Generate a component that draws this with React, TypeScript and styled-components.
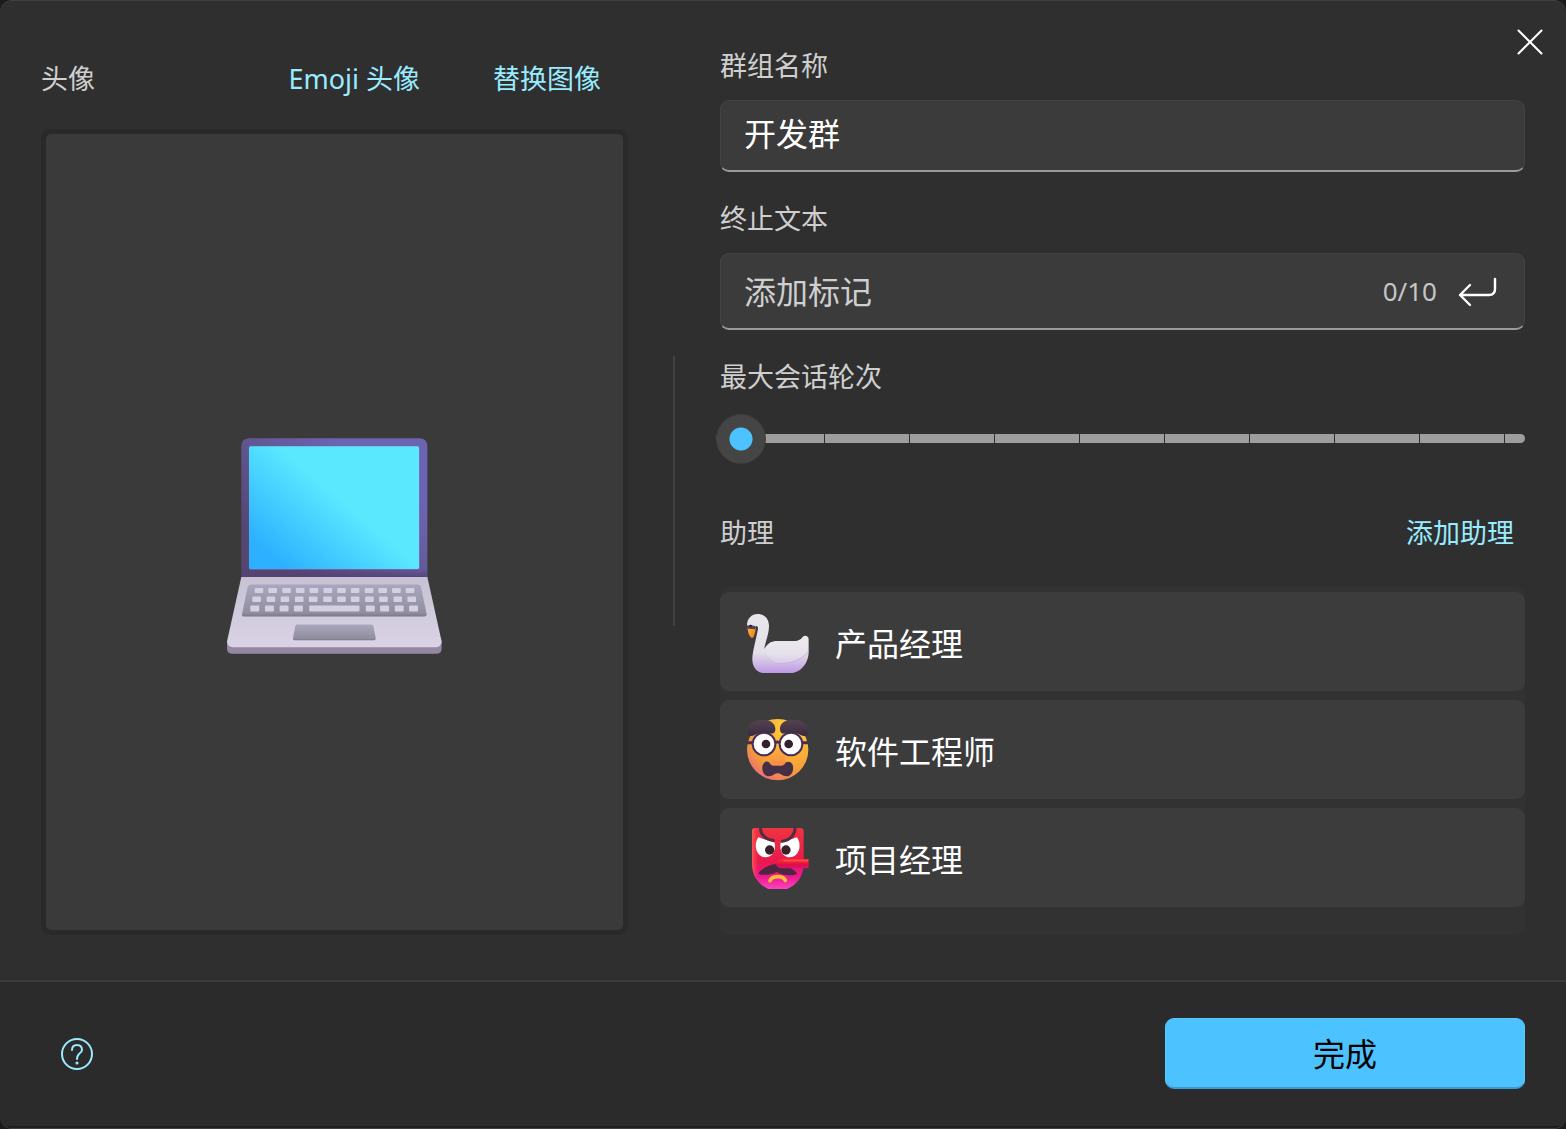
import React, { useState } from "react";
import styled, { createGlobalStyle } from "styled-components";

const GlobalStyle = createGlobalStyle`
  * { box-sizing: border-box; }
  body {
    margin: 0;
    background: #1b1b1b;
    color: #ffffff;
    font-family: "Noto Sans", "Noto Sans CJK SC", sans-serif;
  }
  button, input { font-family: inherit; }
`;

const Dialog = styled.form`
  position: relative;
  display: flex;
  flex-direction: column;
  min-height: 100vh;
  border: solid #414141;
  border-width: 1px 0;
  border-radius: 12px;
  background: #2f2f2f;
  overflow: hidden;
`;

const CloseButton = styled.button`
  position: absolute;
  top: 19px;
  right: 14px;
  display: grid;
  place-items: center;
  width: 44px;
  height: 44px;
  padding: 0;
  border: 0;
  background: none;
  color: #ffffff;
`;

const Content = styled.div`
  flex: 1;
  display: grid;
  grid-template-columns: minmax(0, 587fr) 2px minmax(0, 805fr);
  column-gap: 45px;
  padding: 45px 41px;
`;

const AvatarPanel = styled.section`
  display: flex;
  flex-direction: column;
`;

const AvatarHeader = styled.div`
  display: flex;
  align-items: baseline;
  height: 83px;
  padding-top: 13px;
`;

const AvatarTitle = styled.span`
  margin-right: auto;
  color: #cfcfcf;
  font-size: 27px;
  line-height: 40px;
`;

const LinkButtons = styled.div`
  display: flex;
  gap: 19px;
`;

const LinkButton = styled.button<{ $inset: number }>`
  padding: 0 ${(p) => p.$inset}px;
  border: 0;
  background: none;
  color: #99ebff;
  font-size: 27px;
  line-height: 40px;
  white-space: nowrap;
`;

const AvatarFrame = styled.div`
  flex: 1;
  display: flex;
  align-items: center;
  justify-content: center;
  padding-top: 28px;
  border: 5px solid #292929;
  border-radius: 10px;
  background: #3a3a3a;
`;

const Divider = styled.div`
  align-self: center;
  height: 270px;
  background: #414141;
`;

const Settings = styled.section`
  display: flex;
  flex-direction: column;
`;

const Field = styled.div`
  display: flex;
  flex-direction: column;
  margin-bottom: 27px;
`;

const Label = styled.label`
  color: #cfcfcf;
  font-size: 27px;
  line-height: 40px;
`;

const InputBox = styled.div<{ $height: number; $lift?: number }>`
  display: flex;
  align-items: center;
  height: ${(p) => p.$height}px;
  margin-top: 14px;
  padding: 0 24px ${(p) => p.$lift ?? 0}px 23px;
  border: 1px solid #424242;
  border-bottom: 2px solid #9a9a9a;
  border-radius: 9px;
  background: #3b3b3b;
`;

const TextInput = styled.input`
  flex: 1;
  min-width: 0;
  height: 48px;
  padding: 0;
  border: 0;
  outline: 0;
  background: none;
  color: #ffffff;
  font-size: 32px;
  &::placeholder { color: #cfcfcf; opacity: 1; }
`;

const Counter = styled.span`
  color: #c5c5c5;
  font-size: 26px;
  line-height: 40px;
`;

const EnterButton = styled.button`
  display: grid;
  place-items: center;
  margin-left: 21px;
  padding: 0;
  border: 0;
  background: none;
  color: #ffffff;
`;

const Slider = styled.input`
  appearance: none;
  height: 50px;
  margin: 16px 0 1px -4px;
  background: none;
  outline: 0;

  &::-webkit-slider-runnable-track {
    height: 9px;
    border-radius: 5px;
    background-color: #2f2f2f;
    background-image: linear-gradient(90deg, #9e9e9e calc(100% - 1px), #2f2f2f calc(100% - 1px));
    background-position: 24px 0;
    background-size: calc((100% - 44px) / 9) 100%;
  }

  &::-webkit-slider-thumb {
    appearance: none;
    width: 50px;
    height: 50px;
    margin-top: -20px;
    border: 1px solid #3e3e3e;
    border-radius: 50%;
    background: radial-gradient(circle, #4cc2ff 11px, #454545 12px);
  }
`;

const ListHeader = styled.div`
  display: flex;
  align-items: center;
  justify-content: space-between;
  margin: 22px 0 34px;
`;

const ListTitle = styled.h2`
  margin: 0;
  color: #cfcfcf;
  font-size: 27px;
  font-weight: 400;
  line-height: 40px;
`;

const AssistantList = styled.ul`
  flex: 1;
  display: flex;
  flex-direction: column;
  gap: 9px;
  margin: 0;
  padding: 5px 0 28px;
  border-radius: 9px;
  background: #323232;
  list-style: none;
`;

const Assistant = styled.li`
  display: flex;
  align-items: center;
  gap: 26px;
  height: 99px;
  padding: 0 26px;
  border-radius: 9px;
  background: #3c3c3c;
`;

const AssistantName = styled.span`
  padding-top: 4px;
  font-size: 32px;
  line-height: 48px;
`;

const Footer = styled.footer`
  display: flex;
  align-items: center;
  justify-content: space-between;
  height: 148px;
  padding: 0 41px 3px;
  border-top: 2px solid #3c3c3c;
  background: #2b2b2b;
  box-shadow: inset 0 -2px #1f1f1f;
`;

const HelpButton = styled.button`
  display: grid;
  place-items: center;
  width: 72px;
  height: 72px;
  padding: 0;
  border: 0;
  background: none;
  color: #99ebff;
`;

const DoneButton = styled.button`
  width: 360px;
  height: 71px;
  padding: 2px 0 0;
  border: 1px solid #5bc7ff;
  border-bottom: 2px solid #3b9bd0;
  border-radius: 9px;
  background: #4cc2ff;
  color: #000000;
  font-size: 32px;
  line-height: 48px;
`;

const keyRows = [
  { y: 489, h: 15, xs: [119, 160, 202, 243, 284, 326, 367, 408, 450, 491, 532, 573], w: 26 },
  { y: 515, h: 16, xs: [112, 155, 197, 240, 282, 325, 367, 408, 451, 493, 536, 578], w: 26 },
  { y: 542, h: 18, xs: [106, 150, 194, 237, 453, 496, 540, 583], w: 27 },
];

const Laptop = () => (
  <svg width="215" height="216" viewBox="36 39 646 648" role="img" aria-label="💻">
    <defs>
      <linearGradient id="lid" x1="0" y1="0.65" x2="0.6" y2="0.1">
        <stop offset="0" stopColor="#554570" />
        <stop offset="1" stopColor="#6c64b0" />
      </linearGradient>
      <linearGradient id="lidEdge" x1="0" y1="0" x2="0" y2="1">
        <stop offset="0.93" stopColor="#54447c" stopOpacity="0" />
        <stop offset="1" stopColor="#54406e" />
      </linearGradient>
      <linearGradient id="screen" gradientUnits="userSpaceOnUse" x1="170" y1="400" x2="345" y2="195">
        <stop offset="0" stopColor="#2cb0ff" />
        <stop offset="1" stopColor="#5ae8ff" />
      </linearGradient>
      <linearGradient id="deck" x1="0" y1="0" x2="0" y2="1">
        <stop offset="0" stopColor="#c6c2d4" />
        <stop offset="1" stopColor="#d9d3e5" />
      </linearGradient>
      <linearGradient id="well" x1="0" y1="0" x2="0" y2="1">
        <stop offset="0" stopColor="#a9a7bd" />
        <stop offset="0.88" stopColor="#918e9f" />
        <stop offset="1" stopColor="#7d7888" />
      </linearGradient>
    </defs>
    <path d="M79 462V64Q79 39 104 39H613Q638 39 638 64V462Z" fill="url(#lid)" />
    <path d="M79 462V64Q79 39 104 39H613Q638 39 638 64V462Z" fill="url(#lidEdge)" />
    <rect x="102" y="63" width="514" height="371" rx="5" fill="#7b68ad" />
    <rect x="102" y="63" width="511" height="369" rx="5" fill="url(#screen)" />
    <path d="M36 650H681V670Q681 687 664 687H53Q36 687 36 670Z" fill="#9586a2" />
    <path d="M79 456H638L681 650Q679 667 664 667H53Q38 667 36 650Z" fill="url(#deck)" />
    <path d="M108 479H609Q617 479 619 487L636 568Q636 575 629 575H88Q80 575 81 568L98 487Q100 479 108 479Z" fill="url(#well)" />
    {keyRows.map((row) =>
      row.xs.map((x) => <rect key={`${row.y}-${x}`} x={x} y={row.y} width={row.w} height={row.h} rx="3" fill="#d5cfe2" />),
    )}
    <rect x="283" y="542" width="151" height="18" rx="3" fill="#d5cfe2" />
    <path d="M247 599H470Q475 599 476 604L483 641Q483 646 478 646H239Q233 646 234 641L241 604Q242 599 247 599Z" fill="url(#well)" />
  </svg>
);

const Swan = () => (
  <svg width="63" height="63" viewBox="33 30 189 189" aria-hidden="true">
    <defs>
      <linearGradient id="swanBody" gradientUnits="userSpaceOnUse" x1="0" y1="42" x2="0" y2="219">
        <stop offset="0" stopColor="#e9e6ea" />
        <stop offset="0.65" stopColor="#e4e0e8" />
        <stop offset="0.85" stopColor="#cdb8e6" />
        <stop offset="1" stopColor="#bd97e4" />
      </linearGradient>
      <linearGradient id="swanWing" gradientUnits="userSpaceOnUse" x1="0" y1="115" x2="0" y2="195">
        <stop offset="0" stopColor="#edeaee" />
        <stop offset="0.6" stopColor="#e6e1ea" />
        <stop offset="1" stopColor="#d5c6e8" />
      </linearGradient>
      <linearGradient id="beak" x1="0" y1="0" x2="1" y2="1">
        <stop offset="0" stopColor="#ffb23c" />
        <stop offset="1" stopColor="#f27a16" />
      </linearGradient>
    </defs>
    <path d="M36 76C36 56 50 42 68 42C90 42 103 58 102 80C101 105 91 125 88 147C98 130 108 123 128 123H176C192 123 198 117 203 111C210 103 222 109 221 119V155C221 190 196 219 166 219H86C66 219 53 202 52 181C51 160 64 115 69 87C70 77 62 74 59 86Z" fill="url(#swanBody)" />
    <path d="M89 148C98 132 109 125 128 125H176C192 125 198 119 205 112C211 106 219 110 219 119V150C211 178 165 192 126 189C112 183 96 168 89 148Z" fill="url(#swanWing)" />
    <path d="M128 190C165 193 204 179 220 153" fill="none" stroke="#c4b0d8" strokeWidth="3" opacity="0.8" />
    <path d="M38 82L62 84C61 99 56 114 51 114C44 113 38 98 38 82Z" fill="url(#beak)" />
    <path d="M37 79L45 74L61 79V88L38 86Z" fill="#51435b" />
    <circle cx="47" cy="78" r="4" fill="#2c2032" />
  </svg>
);

const Disguise = () => (
  <svg width="63" height="63" viewBox="33 39 189 189" aria-hidden="true">
    <defs>
      <radialGradient id="face" gradientUnits="userSpaceOnUse" cx="170" cy="70" r="185">
        <stop offset="0" stopColor="#ffd443" />
        <stop offset="0.4" stopColor="#fbb335" />
        <stop offset="0.72" stopColor="#f39a3a" />
        <stop offset="0.86" stopColor="#ee7d62" />
        <stop offset="1" stopColor="#ef59a8" />
      </radialGradient>
      <linearGradient id="brow" x1="0" y1="0" x2="0" y2="1">
        <stop offset="0" stopColor="#54434c" />
        <stop offset="1" stopColor="#3a2a42" />
      </linearGradient>
      <linearGradient id="nose" x1="0" y1="0" x2="0" y2="1">
        <stop offset="0" stopColor="#ffb63a" />
        <stop offset="1" stopColor="#f58a43" />
      </linearGradient>
    </defs>
    <circle cx="128" cy="134" r="92" fill="url(#face)" />
    <path d="M108 128Q127 116 147 128L154 171Q153 183 142 183H114Q103 183 104 171Z" fill="url(#nose)" />
    <path d="M36 113H58M198 113H221M116 115Q127 107 139 115" fill="none" stroke="#482f55" strokeWidth="9" />
    <circle cx="87" cy="117" r="34" fill="#fff" stroke="#482f55" strokeWidth="6" />
    <circle cx="168" cy="117" r="34" fill="#fff" stroke="#482f55" strokeWidth="6" />
    <circle cx="93" cy="117" r="13" fill="#35202c" />
    <circle cx="161" cy="117" r="13" fill="#35202c" />
    <path d="M37 80C35 58 55 44 82 44C108 43 123 57 121 75C119 92 103 84 88 83C66 82 59 92 49 93C41 94 38 89 37 80Z" fill="url(#brow)" />
    <path d="M219 80C221 58 201 44 174 44C148 43 133 57 135 75C137 92 153 84 168 83C190 82 197 92 207 93C215 94 218 89 219 80Z" fill="url(#brow)" />
    <path d="M127 182C119 182 111 184 105 176C101 168 94 168 87 174C80 181 80 198 88 208C97 218 110 214 118 208Q128 202 138 208C146 214 160 218 168 208C176 198 177 181 169 174C162 168 153 170 149 177C143 184 134 182 127 182Z" fill="#452f47" />
  </svg>
);

const Goblin = () => (
  <svg width="63" height="63" viewBox="33 33 189 189" aria-hidden="true">
    <defs>
      <linearGradient id="mask" gradientUnits="userSpaceOnUse" x1="0" y1="40" x2="0" y2="222">
        <stop offset="0" stopColor="#ef3340" />
        <stop offset="0.55" stopColor="#e9194b" />
        <stop offset="0.8" stopColor="#ec188f" />
        <stop offset="1" stopColor="#fb45bd" />
      </linearGradient>
      <linearGradient id="maskSide" x1="0" y1="0" x2="1" y2="0">
        <stop offset="0" stopColor="#ff6655" stopOpacity="0.8" />
        <stop offset="0.12" stopColor="#ff4455" stopOpacity="0" />
      </linearGradient>
      <linearGradient id="longNose" x1="0" y1="0" x2="0" y2="1">
        <stop offset="0" stopColor="#f5333b" />
        <stop offset="0.6" stopColor="#e0103c" />
        <stop offset="1" stopColor="#d4108a" />
      </linearGradient>
    </defs>
    <path d="M51 48Q51 39 60 39H197Q206 39 206 48V145C206 184 186 209 157 222H100C71 209 51 184 51 145Z" fill="url(#mask)" />
    <path d="M51 48Q51 39 60 39H197Q206 39 206 48V145C206 184 186 209 157 222H100C71 209 51 184 51 145Z" fill="url(#maskSide)" />
    <path d="M70 67L119 83C124 109 111 127 91 127C66 126 53 93 70 67Z" fill="#fff" />
    <path d="M186 67L137 83C132 109 145 127 165 127C190 126 203 93 186 67Z" fill="#fff" />
    <circle cx="104" cy="105" r="14" fill="#392129" />
    <circle cx="153" cy="105" r="14" fill="#392129" />
    <path d="M77 38C75 56 90 74 115 76M180 38C182 56 167 75 142 79" fill="none" stroke="#4b3044" strokeWidth="9" strokeLinecap="round" />
    <path d="M122 147C107 148 78 160 70 176C82 183 112 179 126 171C142 181 169 184 187 177C179 160 149 151 122 147Z" fill="#4b2740" />
    <path d="M122 148C123 134 135 132 147 132H221V160H140C130 160 127 156 122 148Z" fill="url(#longNose)" />
    <path d="M145 137H219" stroke="#ff4b3e" strokeWidth="5" />
    <path d="M105 197C111 181 145 181 151 196" fill="none" stroke="#ffbd35" strokeWidth="11" strokeLinecap="round" />
  </svg>
);

const assistants = [
  { name: "产品经理", Icon: Swan },
  { name: "软件工程师", Icon: Disguise },
  { name: "项目经理", Icon: Goblin },
];

export default function App() {
  const [name, setName] = useState("开发群");
  const [stopText, setStopText] = useState("");
  const [rounds, setRounds] = useState(1);

  return (
    <>
      <GlobalStyle />
      <Dialog onSubmit={(e) => e.preventDefault()}>
        <Content>
          <AvatarPanel>
            <AvatarHeader>
              <AvatarTitle>头像</AvatarTitle>
              <LinkButtons>
                <LinkButton type="button" $inset={27}>Emoji 头像</LinkButton>
                <LinkButton type="button" $inset={27}>替换图像</LinkButton>
              </LinkButtons>
            </AvatarHeader>
            <AvatarFrame>
              <Laptop />
            </AvatarFrame>
          </AvatarPanel>

          <Divider />

          <Settings>
            <Field>
              <Label htmlFor="group-name">群组名称</Label>
              <InputBox $height={72} $lift={8}>
                <TextInput id="group-name" value={name} onChange={(e) => setName(e.target.value)} />
              </InputBox>
            </Field>
            <Field>
              <Label htmlFor="stop-text">终止文本</Label>
              <InputBox $height={77}>
                <TextInput
                  id="stop-text"
                  placeholder="添加标记"
                  value={stopText}
                  onChange={(e) => setStopText(e.target.value)}
                />
                <Counter>0/10</Counter>
                <EnterButton type="button" aria-label="添加">
                  <svg width="42" height="32" viewBox="0 0 42 32" fill="none" stroke="currentColor" strokeWidth="2.4" strokeLinecap="round" strokeLinejoin="round">
                    <path d="M37 4V14Q37 20 31 20H2M12 10L2 20L12 30" />
                  </svg>
                </EnterButton>
              </InputBox>
            </Field>
            <Field>
              <Label htmlFor="max-rounds">最大会话轮次</Label>
              <Slider
                id="max-rounds"
                type="range"
                min={1}
                max={10}
                value={rounds}
                onChange={(e) => setRounds(Number(e.target.value))}
              />
            </Field>

            <ListHeader>
              <ListTitle>助理</ListTitle>
              <LinkButton type="button" $inset={11}>添加助理</LinkButton>
            </ListHeader>
            <AssistantList>
              {assistants.map(({ name: label, Icon }) => (
                <Assistant key={label}>
                  <Icon />
                  <AssistantName>{label}</AssistantName>
                </Assistant>
              ))}
            </AssistantList>
          </Settings>
        </Content>

        <Footer>
          <HelpButton type="button" aria-label="帮助">
            <svg width="34" height="34" viewBox="0 0 34 34" fill="none" stroke="currentColor" strokeWidth="2" strokeLinecap="round">
              <circle cx="17" cy="17" r="15" />
              <path d="M12 13Q12 8 17 8Q22 8 22 13Q22 15 19 17Q17 19 17 22" />
              <circle cx="17" cy="26" r="1" fill="currentColor" stroke="none" />
              <circle cx="17" cy="26" r="0.6" />
            </svg>
          </HelpButton>
          <DoneButton type="submit">完成</DoneButton>
        </Footer>
        <CloseButton type="button" aria-label="关闭">
          <svg width="26" height="26" viewBox="0 0 26 26" fill="none" stroke="currentColor" strokeWidth="2" strokeLinecap="round">
            <path d="M1.5 1.5L24.5 24.5M24.5 1.5L1.5 24.5" />
          </svg>
        </CloseButton>
      </Dialog>
    </>
  );
}
